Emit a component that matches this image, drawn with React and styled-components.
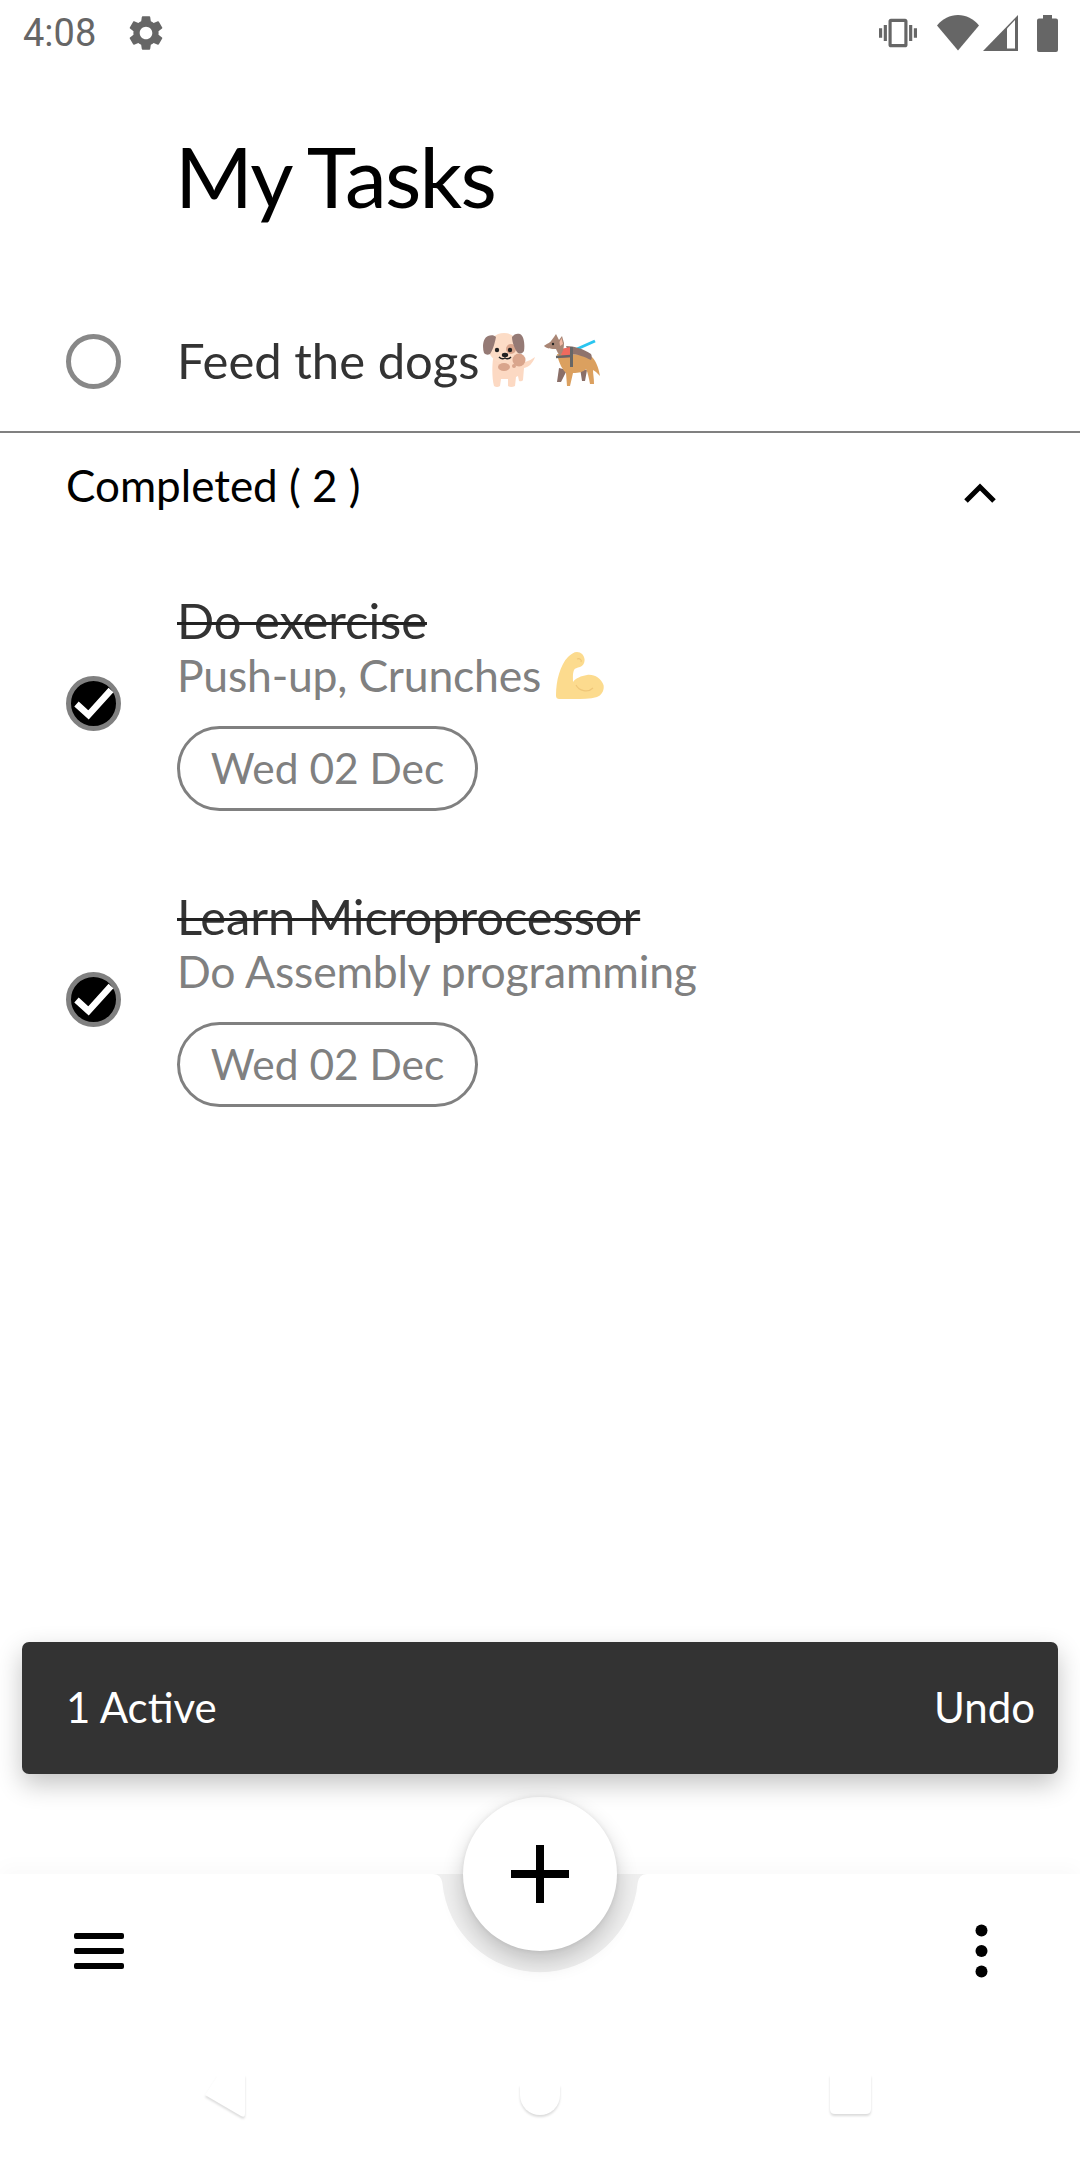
import React from "react";
import styled, { createGlobalStyle } from "styled-components";

const Global = createGlobalStyle`
  html, body { margin: 0; padding: 0; background: #fff; }
  * { box-sizing: border-box; }
`;
const SANS = `Lato, "Noto Sans", sans-serif`;

const Page = styled.div`
  width: 1080px; height: 2160px; display: flex; flex-direction: column;
  background: #fff; font-family: ${SANS}; font-weight: 400; overflow: hidden; position: relative;
`;
const StatusBar = styled.div`
  height: 66px; padding: 0 22px 0 23px; display: flex; align-items: center;
  color: #666;
`;
const Clock = styled.span`
  font: 400 38px/1 Roboto, sans-serif; width: 102px;
`;
const StatusIcons = styled.div`
  margin-left: auto; display: flex; align-items: center; gap: 4px;
`;
const Heading = styled.h1`
  margin: 0; height: 227px; padding: 60px 0 0 175px;
  font-weight: 400; font-size: 84px; line-height: 100px; color: #000; letter-spacing: -1.800px;
`;
const ActiveRow = styled.div`
  height: 140px; display: flex; align-items: center; padding: 0 0 2px 66px;
  border-bottom: 2px solid #808080;
`;
const Radio = styled.span`
  width: 55px; height: 55px; border-radius: 50%; border: 5px solid #888; flex: none;
`;
const TaskName = styled.span`
  margin: -2px 0 0 56px; font-size: 49px; line-height: 56px; color: #333;
  display: flex; align-items: center;
`;
const CompletedHeader = styled.div`
  height: 163px; padding: 26px 84px 0 66px; display: flex; align-items: flex-start; justify-content: space-between;
`;
const CompletedLabel = styled.span`
  font-size: 44px; line-height: 52px; color: #000;
`;
const Chevron = styled.svg`
  margin-top: 24px; display: block;
`;
const TaskList = styled.div`
  display: flex; flex-direction: column; gap: 81px; padding-left: 66px;
`;
const TaskRow = styled.div`
  display: flex; align-items: center;
`;
const CheckIcon = styled.svg`
  flex: none; display: block;
`;
const TaskBody = styled.div`
  margin-left: 56px; display: flex; flex-direction: column; align-items: flex-start; height: 215px;
`;
const StruckTitle = styled.span`
  font-size: 49px; line-height: 48px; color: #333; letter-spacing: -.1px;
  text-decoration: line-through; text-decoration-thickness: 3px; text-decoration-color: #222;
`;
const SubTitle = styled.span`
  margin-top: 5px; font-size: 44.500px; line-height: 52px; color: #808080; letter-spacing: -.2px;
  display: flex; align-items: center; gap: 15px;
`;
const DateChip = styled.span`
  margin-top: 25px; width: 301px; height: 85px; padding-bottom: 2px; border: 3px solid #808080; border-radius: 43px;
  display: flex; align-items: center; justify-content: center;
  font-size: 42.500px; color: #808080;
`;
const Snackbar = styled.div`
  margin: auto 22px 0; height: 132px; background: #333; border-radius: 7px;
  padding: 0 23px 2px 44px; display: flex; align-items: center; justify-content: space-between;
  color: #fff; font-size: 42px;
  box-shadow: 0 10px 26px rgba(0,0,0,.24);
  position: relative; z-index: 2;
`;
const BottomArea = styled.div`
  margin-top: 100px; height: 286px; background: #fff; position: relative;
  box-shadow: 0 -8px 18px rgba(0,0,0,.025);
  display: flex; flex-direction: column;
`;
const Notch = styled.svg`
  position: absolute; left: 430px; top: 0; display: block;
`;
const Fab = styled.button`
  position: absolute; left: 463px; top: -77px; width: 154px; height: 154px;
  border: 0; border-radius: 50%; background: #fff; padding: 0;
  display: flex; align-items: center; justify-content: center;
  box-shadow: 0 10px 22px rgba(0,0,0,.2), 0 0 5px rgba(0,0,0,.08);
`;
const AppBar = styled.div`
  height: 154px; padding: 0 92px 0 74px; display: flex; align-items: center; justify-content: space-between;
`;
const NavBar = styled.div`
  height: 132px; padding: 43px 209px 0 204px; display: flex; align-items: flex-start; justify-content: space-between;
`;
const NavGlyph = styled.svg`
  display: block; overflow: visible; filter: drop-shadow(0 2px 1px rgba(0,0,0,.14));
`;

const Gear = () => (
  <svg width="42" height="42" viewBox="0 0 24 24" fill="#666"><path d="M19.14 12.94c.04-.3.06-.61.06-.94 0-.32-.02-.64-.07-.94l2.03-1.58a.49.49 0 0 0 .12-.61l-1.92-3.32a.488.488 0 0 0-.59-.22l-2.39.96c-.5-.38-1.03-.7-1.62-.94l-.36-2.54a.484.484 0 0 0-.48-.41h-3.84c-.24 0-.43.17-.47.41l-.36 2.54c-.59.24-1.13.57-1.62.94l-2.39-.96c-.22-.08-.47 0-.59.22L2.74 8.87c-.12.21-.08.47.12.61l2.03 1.58c-.05.3-.09.63-.09.94s.02.64.07.94l-2.03 1.58a.49.49 0 0 0-.12.61l1.92 3.32c.12.22.37.29.59.22l2.39-.96c.5.38 1.03.7 1.62.94l.36 2.54c.05.24.24.41.48.41h3.84c.24 0 .44-.17.47-.41l.36-2.54c.59-.24 1.13-.56 1.62-.94l2.39.96c.22.08.47 0 .59-.22l1.92-3.32c.12-.22.07-.47-.12-.61l-2.01-1.58zM12 15.6c-1.98 0-3.6-1.62-3.6-3.6s1.62-3.6 3.6-3.6 3.6 1.62 3.6 3.6-1.62 3.6-3.6 3.6z"/></svg>
);
const Vibrate = () => (
  <svg width="38" height="38" viewBox="0 0 24 24" fill="#666" style={{ marginRight: 16 }}><path d="M0 15h2V9H0v6zm3 2h2V7H3v10zm19-8v6h2V9h-2zm-3 8h2V7h-2v10zM16.5 3h-9C6.67 3 6 3.67 6 4.5v15c0 .83.67 1.5 1.5 1.5h9c.83 0 1.5-.67 1.5-1.5v-15c0-.83-.67-1.5-1.5-1.5zM16 19H8V5h8v14z"/></svg>
);
const Wifi = () => (
  <svg width="42" height="36" viewBox="0 0 42 36"><path d="M0 10.500C5.500 3.800 13 0 21 0s15.500 3.800 21 10.500L21 35.500Z" fill="#666"/></svg>
);
const Signal = () => (
  <svg width="35" height="36" viewBox="0 0 35 36" style={{ marginRight: 15 }}><path d="M0 36 35 0V36Z" fill="#666"/><path d="M24 13.500V33.500H32V5Z" fill="#fff"/></svg>
);
const Battery = () => (
  <svg width="21" height="37" viewBox="0 0 21 37"><path d="M6 0H15V3.500H19A2 2 0 0 1 21 5.500V35A2 2 0 0 1 19 37H2A2 2 0 0 1 0 35V5.500A2 2 0 0 1 2 3.500H6Z" fill="#666"/></svg>
);
const Checked = () => (
  <CheckIcon width="55" height="55" viewBox="0 0 55 55">
    <circle cx="27.500" cy="27.500" r="25" fill="#000" stroke="#808080" strokeWidth="5"/>
    <path d="M10.500 28 22.500 39 45 14" fill="none" stroke="#fff" strokeWidth="6.500"/>
  </CheckIcon>
);
const Puppy = () => (
  <svg width="52" height="55" viewBox="0 0 52 55" style={{ margin: "0 9px 0 4px" }}>
    <path d="M10 26C9 34 9 46 11 53q3 2 6 0l1-7h7l0 7q3 2 7 0l1-9 2-1 1 5q3 1 4-1l1-12c5-1 9-5 11-11-3 2-6 4-10 5-4-6-12-8-19-8Z" fill="#fcd9c3"/>
    <ellipse cx="21" cy="15" rx="15.500" ry="15" fill="#fcdcc6"/>
    <ellipse cx="36" cy="27" rx="6.500" ry="6.500" fill="#d9a58c"/>
    <ellipse cx="21" cy="34" rx="6" ry="4" fill="#d9a58c"/>
    <circle cx="31" cy="33" r="2" fill="#d9a58c"/>
    <circle cx="28" cy="16" r="5" fill="#d9a58c"/>
    <path d="M5 3C0 5-1 14 1 20c2 2 4 2 6 1 3-4 5-12 6-17-2-2-5-2-8-1ZM37 1c4 2 5 10 4 17-2 3-4 3-6 2-3-3-6-11-6-16 2-3 5-4 8-3Z" fill="#957a75"/>
    <circle cx="14" cy="17" r="2.200" fill="#222"/><circle cx="27" cy="17" r="2.200" fill="#222"/>
    <ellipse cx="22" cy="22" rx="3.200" ry="2.200" fill="#222"/>
    <path d="M16 24q3 3 6 1 3 2 6-1" fill="none" stroke="#222" strokeWidth="1.500"/>
  </svg>
);
const GuideDog = () => (
  <svg width="56" height="52" viewBox="0 0 56 52">
    <path d="M33 15 51 7" stroke="#29c5f0" strokeWidth="3"/>
    <path d="M15 34 13 48h4l6-12ZM36 34 38 47h3l2-11Z" fill="#8a6f68"/>
    <path d="M13 20C15 30 19 36 22 39l1 13h3l3-13c6 0 10-1 13-4 2 4 3 10 4 15h4c0-6-1-10-1-14l3 2 4 4c-1-6-3-14-8-19-8-3-20-3-32-3Z" fill="#dba05f"/>
    <path d="M22 12C30 12 40 15 47 20c1 2 1 4 0 6-6-3-13-6-22-6Z" fill="#8f736c"/>
    <path d="M16 15 27 13 28 23 18 24Z" fill="#ef6a5e"/>
    <path d="M10 3 12 0 15 6 18 2 20 9C20 14 19 18 16 22 14 20 13 17 12 15 8 15 3 15 0 12 2 10 6 9 7 7Z" fill="#a98675"/>
    <path d="M17.500 4 19 10 16 12 15.500 8Z" fill="#f2b9a4"/>
    <circle cx="9" cy="10" r="1.200" fill="#222"/>
    <path d="M12 23 27 22" stroke="#666" strokeWidth="2.500"/>
    <path d="M27.500 13V33" stroke="#666" strokeWidth="3"/>
  </svg>
);
const Biceps = () => (
  <svg width="48" height="47" viewBox="0 0 48 47">
    <path d="M0 43C0 36 1 28 3 22 5 15 8 9 12 5 15 2 18 0 21 0 25 0 28 3 28.500 7 29 11 27 14 24 15 21 16 19 16 18 18 16.500 22 17 26 17 30 20 26 25 24 31 23 38 22 45 26 47.500 33 48.500 38 46 43 41 45 34 47 26 47 18 47H4C1 47 0 46 0 43Z" fill="#fcdb8e"/>
    <path d="M20 33c3 6 12 8 17 3" fill="none" stroke="#efc678" strokeWidth="1.200"/>
    <path d="M21 7c3-1 5 1 4 3" fill="none" stroke="#efc678" strokeWidth="1.200"/>
  </svg>
);

const DONE = [
  { id: 1, title: "Do exercise", sub: "Push-up, Crunches", emoji: true },
  { id: 2, title: "Learn Microprocessor", sub: "Do Assembly programming", emoji: false },
];

export default function App() {
  return (
    <Page>
      <Global />
      <StatusBar>
        <Clock>4:08</Clock>
        <Gear />
        <StatusIcons>
          <Vibrate /><Wifi /><Signal /><Battery />
        </StatusIcons>
      </StatusBar>
      <Heading>My Tasks</Heading>
      <ActiveRow>
        <Radio />
        <TaskName>Feed the dogs<Puppy /><GuideDog /></TaskName>
      </ActiveRow>
      <CompletedHeader>
        <CompletedLabel>Completed ( 2 )</CompletedLabel>
        <Chevron width="32" height="20" viewBox="0 0 32 20"><path d="M2 18 16 4 30 18" fill="none" stroke="#000" strokeWidth="5"/></Chevron>
      </CompletedHeader>
      <TaskList>
        {DONE.map((t) => (
          <TaskRow key={t.id}>
            <Checked />
            <TaskBody>
              <StruckTitle>{t.title}</StruckTitle>
              <SubTitle>{t.sub}{t.emoji && <Biceps />}</SubTitle>
              <DateChip>Wed 02 Dec</DateChip>
            </TaskBody>
          </TaskRow>
        ))}
      </TaskList>
      <Snackbar><span>1 Active</span><span>Undo</span></Snackbar>
      <BottomArea>
        <Notch width="220" height="100" viewBox="0 0 220 100">
          <path d="M0 0H3Q11 0 12.400 9A98 98 0 0 0 207.600 9Q209 0 217 0H220Z" fill="#efefef"/>
        </Notch>
        <Fab aria-label="Add">
          <svg width="58" height="58" viewBox="0 0 58 58"><path d="M25 0h8v25h25v8H33v25h-8V33H0v-8h25Z" fill="#000"/></svg>
        </Fab>
        <AppBar>
          <svg width="50" height="36" viewBox="0 0 50 36" fill="#000">
            <rect y="0" width="50" height="6" rx="2"/><rect y="15" width="50" height="6" rx="2"/><rect y="30" width="50" height="6" rx="2"/>
          </svg>
          <svg width="13" height="54" viewBox="0 0 13 54" fill="#000">
            <circle cx="6.500" cy="6.500" r="6"/><circle cx="6.500" cy="27" r="6"/><circle cx="6.500" cy="47.500" r="6"/>
          </svg>
        </AppBar>
        <NavBar>
          <NavGlyph width="46" height="47" viewBox="0 0 46 47"><path d="M41 4V43Q41 47 37 45L1 24 14 4Z" fill="#fff"/></NavGlyph>
          <NavGlyph width="40" height="44" viewBox="0 0 40 44"><path d="M0 24A20 20 0 0 0 40 24V14H0Z" fill="#fff"/></NavGlyph>
          <NavGlyph width="41" height="44" viewBox="0 0 41 44"><path d="M0 4H41V38Q41 43 36 43H5Q0 43 0 38Z" fill="#fff"/></NavGlyph>
        </NavBar>
      </BottomArea>
    </Page>
  );
}
